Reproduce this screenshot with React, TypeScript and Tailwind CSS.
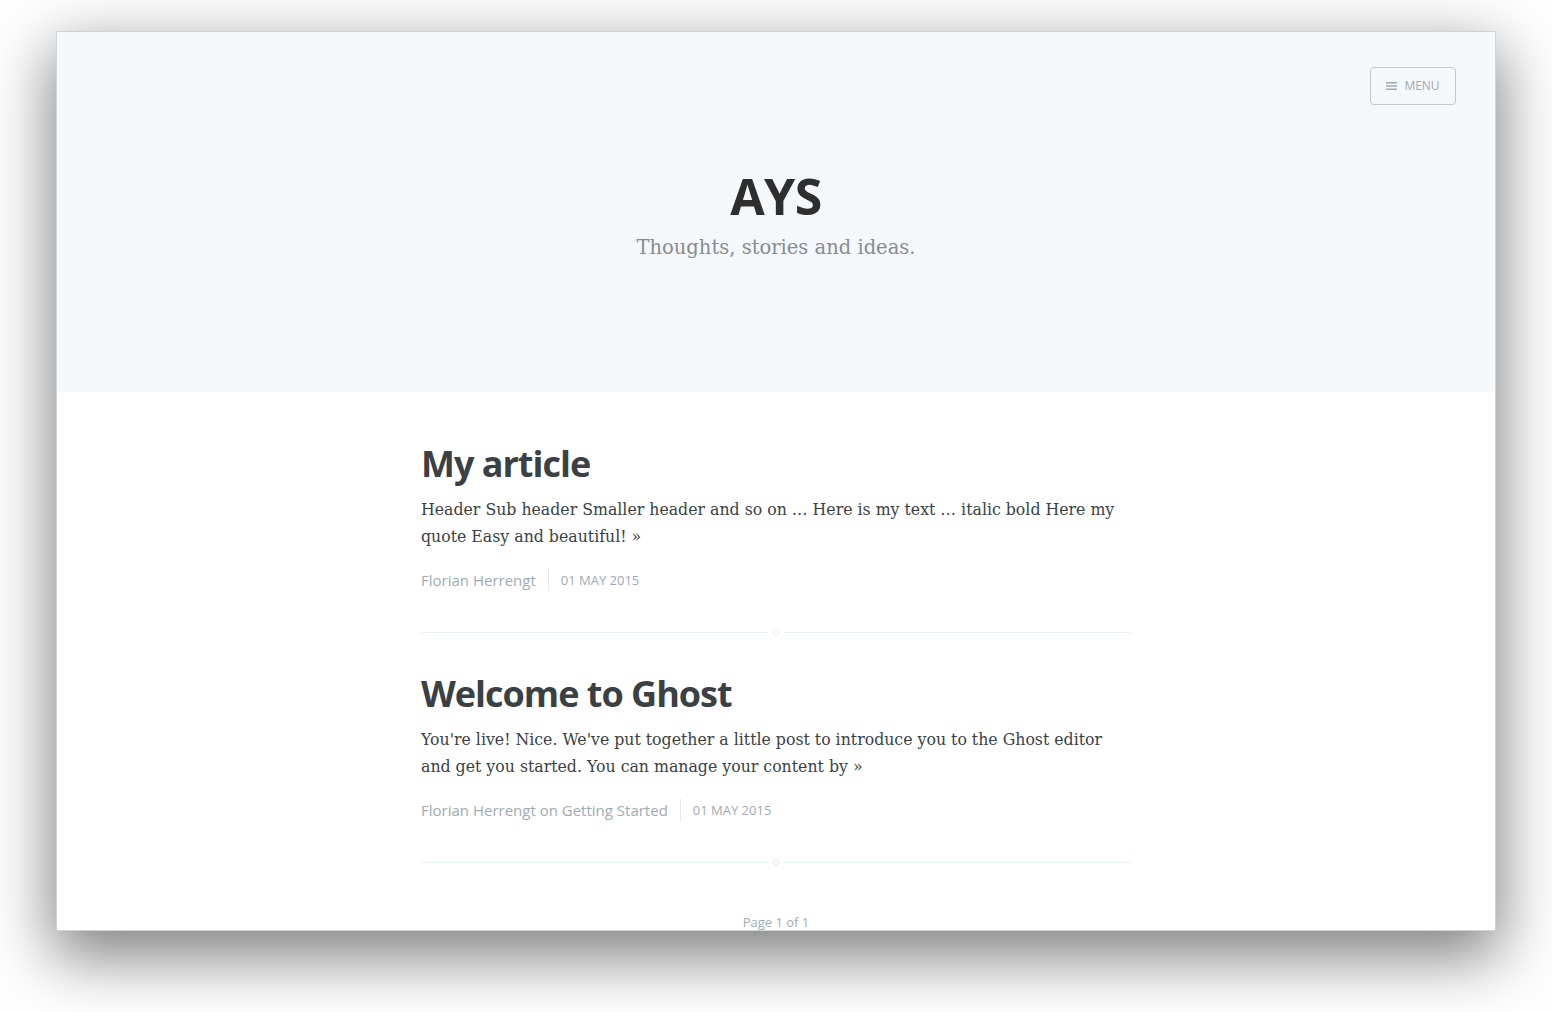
const posts = [
  {
    title: "My article",
    excerpt:
      "Header Sub header Smaller header and so on … Here is my text … italic bold Here my quote Easy and beautiful!",
    author: "Florian Herrengt",
    date: "01 May 2015",
  },
  {
    title: "Welcome to Ghost",
    excerpt:
      "You're live! Nice. We've put together a little post to introduce you to the Ghost editor and get you started. You can manage your content by",
    author: "Florian Herrengt on Getting Started",
    date: "01 May 2015",
  },
];

const sans = "font-['Open_Sans',sans-serif]";
const serif = "font-['DejaVu_Serif',serif]";

function Divider() {
  return (
    <div className="flex items-center">
      <div className="h-px flex-1 bg-[#ebf2f6]" />
      <div className="mx-[5px] h-[7px] w-[6px] rounded-full border border-[#e3ecf2]" />
      <div className="h-px flex-1 bg-[#ebf2f6]" />
    </div>
  );
}

function Post({ post }: { post: (typeof posts)[number] }) {
  return (
    <article className="pt-[36px]">
      <h2 className={`${sans} text-[36px] font-bold leading-[43px] tracking-[-1px] text-[#3a4145]`}>
        {post.title}
      </h2>
      <p className={`${serif} mt-[11px] text-[15.75px] leading-[27px] text-[#3a4145]`}>
        {post.excerpt}&nbsp;»
      </p>
      <div className={`${sans} mt-[19px] flex items-center text-[15px] leading-[22px] text-[#9eabb3]`}>
        <span>{post.author}</span>
        <span className="mx-[12px] h-[22px] w-px bg-[#e3e8eb]" />
        <span className="text-[13px] uppercase">{post.date}</span>
      </div>
      <div className="mt-[38px]">
        <Divider />
      </div>
    </article>
  );
}

export default function App() {
  return (
    <div className="min-h-screen bg-white pt-[31px] pl-[56px]">
      <div className="h-[900px] w-[1440px] overflow-hidden border border-[#d0d3d6] bg-white shadow-[0_22px_60px_4px_rgba(0,0,0,0.5)]">
        <header className="relative flex h-[360px] flex-col items-center bg-[#f4f8fb] pt-[132px]">
          <button
            className={`${sans} absolute right-[39px] top-[35px] flex h-[38px] w-[86px] items-center justify-center gap-[7px] rounded-[4px] border border-[#bfc8cd] text-[12px] uppercase text-[#9eabb3]`}
          >
            <svg width="11" height="8" viewBox="0 0 11 8">
              <rect y="0" width="11" height="1.5" fill="#9eabb3" />
              <rect y="3.25" width="11" height="1.5" fill="#9eabb3" />
              <rect y="6.5" width="11" height="1.5" fill="#9eabb3" />
            </svg>
            Menu
          </button>
          <h1 className={`${sans} text-[50px] font-bold leading-[64px] tracking-[-0.5px] text-[#2e2e2e]`}>AYS</h1>
          <p className={`${serif} mt-[4px] text-[19.5px] leading-[32px] text-[#858d92]`}>
            Thoughts, stories and ideas.
          </p>
        </header>
        <main className="mx-auto w-[710px] pt-[14px]">
          {posts.map((p) => (
            <Post key={p.title} post={p} />
          ))}
          <div className={`${sans} mt-[47px] text-center text-[13px] text-[#9eabb3]`}>Page 1 of 1</div>
        </main>
      </div>
    </div>
  );
}
